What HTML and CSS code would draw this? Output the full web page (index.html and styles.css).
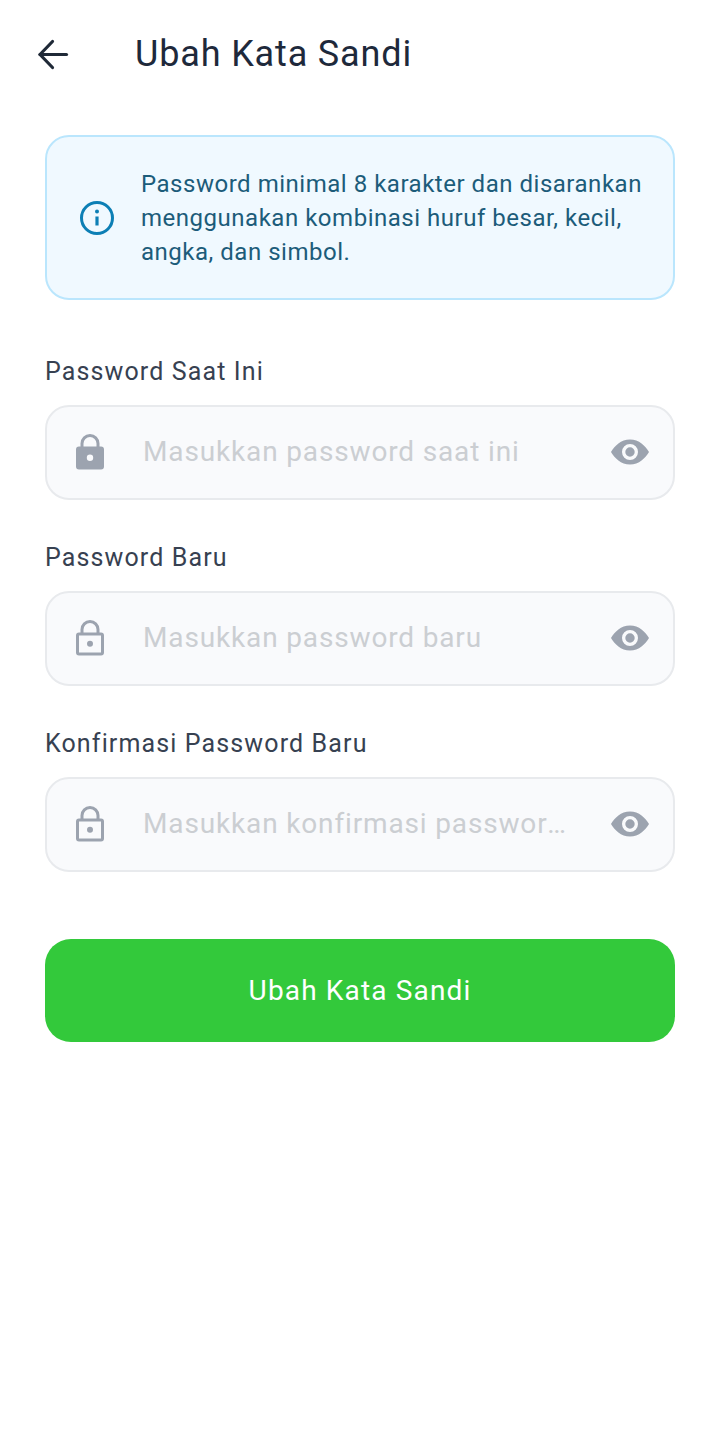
FILE: index.html
```html
<!DOCTYPE html>
<html lang="id">

<head>
    <meta charset="UTF-8">
    <meta name="viewport" content="width=device-width, initial-scale=1.0">
    <title>Ubah Kata Sandi</title>
    <link rel="stylesheet" href="styles.css">
</head>

<body>
    <header class="topbar">
        <button type="button" class="back-btn" aria-label="Kembali">
            <svg width="36" height="36" viewBox="0 0 36 36" fill="none" stroke="#1f2937" stroke-width="3.2" stroke-linecap="round" stroke-linejoin="round">
                <path d="M31.500 18.500H5"/>
                <path d="M17.500 5.500 5 18.500l12.500 13"/>
            </svg>
        </button>
        <h1>Ubah Kata Sandi</h1>
    </header>

    <main class="container">
        <div class="info-box">
            <svg class="info-icon" width="36" height="36" viewBox="0 0 36 36" fill="none" stroke="#0c7fb5">
                <circle cx="18" cy="18" r="15.500" stroke-width="3"/>
                <path d="M18 16.500v9" stroke-width="3.200"/>
                <circle cx="18" cy="11.500" r="2" fill="#0c7fb5" stroke="none"/>
            </svg>
            <p>Password minimal 8 karakter dan disarankan menggunakan kombinasi huruf besar, kecil, angka, dan simbol.</p>
        </div>

        <form class="form">
            <div class="form-group">
                <label for="current">Password Saat Ini</label>
                <div class="field">
                    <svg class="lock" width="42" height="42" viewBox="0 0 42 42">
                        <path fill="#9ca3af" fill-rule="evenodd" d="M11.500 15.500v-3a9.500 9.500 0 0 1 19 0v3H32a3 3 0 0 1 3 3v17a3 3 0 0 1-3 3H10a3 3 0 0 1-3-3v-17a3 3 0 0 1 3-3h1.500Zm3 0h13v-3a6.500 6.500 0 0 0-13 0v3ZM21 30a3.200 3.200 0 1 0 0-6.400 3.200 3.200 0 0 0 0 6.400Z"/>
                    </svg>
                    <input type="password" id="current" placeholder="Masukkan password saat ini">
                    <svg class="eye" width="40" height="28" viewBox="0 0 40 28">
                        <path fill="#9ca3af" fill-rule="evenodd" d="M20 1.500C29 1.500 35.500 8 39 14c-3.500 6-10 12.500-19 12.500S4.500 20 1 14C4.500 8 11 1.500 20 1.500Zm0 4.500a8 8 0 1 0 0 16 8 8 0 0 0 0-16Zm0 3.300a4.700 4.700 0 1 1 0 9.400 4.700 4.700 0 0 1 0-9.400Z"/>
                    </svg>
                </div>
            </div>
            <div class="form-group">
                <label for="new">Password Baru</label>
                <div class="field">
                    <svg class="lock" width="42" height="42" viewBox="0 0 42 42">
                        <path fill="none" stroke="#9ca3af" stroke-width="3" d="M10 17h22a1.500 1.500 0 0 1 1.500 1.500v17A1.500 1.500 0 0 1 32 37H10a1.500 1.500 0 0 1-1.500-1.500v-17A1.500 1.500 0 0 1 10 17ZM13 17v-4.500a8 8 0 0 1 16 0V17"/>
                        <circle cx="21" cy="26.800" r="3" fill="#9ca3af"/>
                    </svg>
                    <input type="password" id="new" placeholder="Masukkan password baru">
                    <svg class="eye" width="40" height="28" viewBox="0 0 40 28">
                        <path fill="#9ca3af" fill-rule="evenodd" d="M20 1.500C29 1.500 35.500 8 39 14c-3.500 6-10 12.500-19 12.500S4.500 20 1 14C4.500 8 11 1.500 20 1.500Zm0 4.500a8 8 0 1 0 0 16 8 8 0 0 0 0-16Zm0 3.300a4.700 4.700 0 1 1 0 9.400 4.700 4.700 0 0 1 0-9.400Z"/>
                    </svg>
                </div>
            </div>
            <div class="form-group">
                <label for="confirm">Konfirmasi Password Baru</label>
                <div class="field">
                    <svg class="lock" width="42" height="42" viewBox="0 0 42 42">
                        <path fill="none" stroke="#9ca3af" stroke-width="3" d="M10 17h22a1.500 1.500 0 0 1 1.500 1.500v17A1.500 1.500 0 0 1 32 37H10a1.500 1.500 0 0 1-1.500-1.500v-17A1.500 1.500 0 0 1 10 17ZM13 17v-4.500a8 8 0 0 1 16 0V17"/>
                        <circle cx="21" cy="26.800" r="3" fill="#9ca3af"/>
                    </svg>
                    <input type="password" id="confirm" placeholder="Masukkan konfirmasi password baru">
                    <svg class="eye" width="40" height="28" viewBox="0 0 40 28">
                        <path fill="#9ca3af" fill-rule="evenodd" d="M20 1.500C29 1.500 35.500 8 39 14c-3.500 6-10 12.500-19 12.500S4.500 20 1 14C4.500 8 11 1.500 20 1.500Zm0 4.500a8 8 0 1 0 0 16 8 8 0 0 0 0-16Zm0 3.300a4.700 4.700 0 1 1 0 9.400 4.700 4.700 0 0 1 0-9.400Z"/>
                    </svg>
                </div>
            </div>
            <button type="button" class="btn">Ubah Kata Sandi</button>
        </form>
    </main>
</body>

</html>
```

FILE: styles.css
```css
* {
    box-sizing: border-box;
}

body {
    font-family: Roboto, "Liberation Sans", sans-serif;
    background-color: #fff;
    color: #1f2937;
    margin: 0;
    min-height: 1437px;
}

.topbar {
    display: flex;
    align-items: center;
    height: 107px;
    padding-left: 35px;
}

.back-btn {
    display: flex;
    width: 36px;
    height: 36px;
    padding: 0;
    margin-right: 64px;
    background: none;
    border: none;
}

h1 {
    margin: 0;
    font-size: 36px;
    font-weight: 400;
    letter-spacing: 0.85px;
    color: #1e293b;
}

.container {
    padding: 28px 45px 0;
}

.info-box {
    display: flex;
    align-items: center;
    gap: 26px;
    height: 165px;
    padding: 0 20px 0 32px;
    background-color: #f0f9ff;
    border: 2px solid #bae6fd;
    border-radius: 24px;
}

.info-icon {
    flex-shrink: 0;
}

.info-box p {
    margin: 0;
    font-size: 24px;
    line-height: 34px;
    letter-spacing: 0.52px;
    color: #1c5c7a;
}

.form {
    margin-top: 55px;
}

.form-group {
    margin-bottom: 41px;
}

label {
    display: block;
    margin-bottom: 16px;
    font-size: 25px;
    line-height: 34px;
    letter-spacing: 1.13px;
    color: #374151;
}

.field {
    display: flex;
    align-items: center;
    height: 95px;
    padding: 0 23px 2px 22px;
    background-color: #f9fafc;
    border: 2px solid #e8eaed;
    border-radius: 24px;
}

.lock {
    flex-shrink: 0;
}

.eye {
    flex-shrink: 0;
    margin-left: 42px;
}

input {
    flex: 1;
    min-width: 0;
    margin-left: 32px;
    padding: 0;
    font-family: inherit;
    font-size: 28px;
    letter-spacing: 0.85px;
    color: #1f2937;
    background: none;
    border: none;
    outline: none;
    text-overflow: ellipsis;
}

input::placeholder {
    color: #cbced2;
    opacity: 1;
}

.btn {
    display: block;
    width: 100%;
    height: 103px;
    margin-top: 67px;
    font-family: inherit;
    font-size: 28px;
    letter-spacing: 1.15px;
    color: #fff;
    background-color: #33c93b;
    border: none;
    border-radius: 26px;
}
```
